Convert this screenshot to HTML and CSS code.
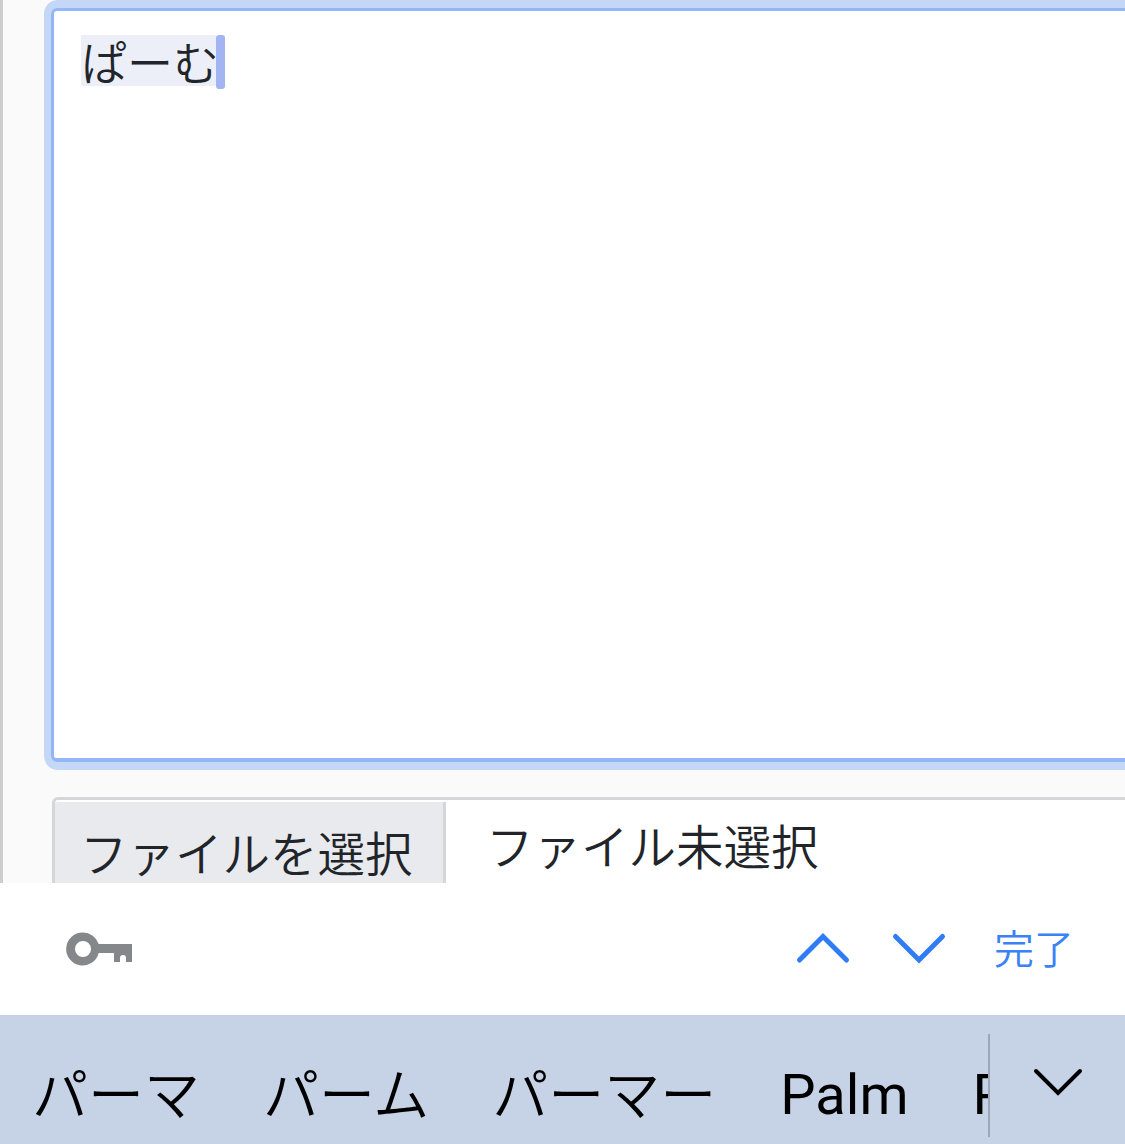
FILE: index.html
```html
<!DOCTYPE html>
<html lang="ja">
<head>
    <title>ぱーむ</title>
    <link rel="stylesheet" href="styles.css">
</head>
<body>
    <main class="page">
        <div class="editor">
            <div class="editor-inner">
                <span class="composing">ぱーむ</span><span class="caret"></span>
            </div>
        </div>
        <div class="file-input">
            <div class="file-button">ファイルを選択</div>
            <div class="file-name">ファイル未選択</div>
        </div>
    </main>

    <div class="toolbar">
        <svg class="key-icon" width="68" height="34" viewBox="0 0 68 34">
            <path fill-rule="evenodd" fill="#85888b" d="M17 .5a16.500 16.500 0 0 1 15.700 11.500H66v18h-6v-4a3 3 0 0 0-6 0v4h-6v-9H32.700A16.500 16.500 0 1 1 17 .5zM17 9a8 8 0 1 0 0 16 8 8 0 0 0 0-16z"/>
        </svg>
        <div class="toolbar-actions">
            <svg class="chevron" width="56" height="34" viewBox="0 0 56 34">
                <path d="M4.500 28L28 4.500 51.500 28"/>
            </svg>
            <svg class="chevron" width="56" height="34" viewBox="0 0 56 34">
                <path d="M4.500 4.500L28 28 51.500 4.500"/>
            </svg>
            <span class="done">完了</span>
        </div>
    </div>

    <div class="suggestions">
        <div class="suggestion-list">
            <span class="kana">パーマ</span>
            <span class="kana">パーム</span>
            <span class="kana">パーマー</span>
            <span class="latin">Palm</span>
            <span class="latin">Parm</span>
        </div>
        <div class="suggestion-more">
            <svg width="50" height="30" viewBox="0 0 50 30">
                <path d="M3 3l22 22L47 3"/>
            </svg>
        </div>
    </div>
</body>
</html>
```

FILE: styles.css
```css
html, body {
    margin: 0;
    padding: 0;
}
body {
    width: 1125px;
    height: 1144px;
    overflow: hidden;
    background: #fff;
    font-family: "Noto Sans CJK JP", "Liberation Sans", sans-serif;
    color: #212529;
}
.page {
    box-sizing: border-box;
    height: 883px;
    overflow: hidden;
    padding-left: 41px;
    background: #fafafa;
    border-left: 3px solid #cdcdcd;
}
.editor {
    box-sizing: border-box;
    width: 1200px;
    height: 770px;
    border: 8px solid #c4d7f7;
    border-left-width: 7px;
    border-radius: 14px;
}
.editor-inner {
    box-sizing: border-box;
    display: flex;
    align-items: flex-start;
    height: 754px;
    padding: 24px 0 0 27px;
    background: #fff;
    border: 3px solid #93b6f9;
    border-bottom-width: 4px;
    border-radius: 6px;
}
.composing {
    width: 135px;
    height: 51px;
    font-size: 46px;
    font-weight: 350;
    line-height: 51px;
    white-space: nowrap;
    background: #eceff8;
}
.caret {
    width: 9px;
    height: 54px;
    background: #a3b4f2;
    border-radius: 3px;
}
.file-input {
    box-sizing: border-box;
    display: flex;
    width: 1200px;
    height: 120px;
    margin: 27px 0 0 8px;
    padding-top: 2px;
    background: #fff;
    border: 3px solid #d4d6da;
    border-radius: 6px;
    font-size: 47.500px;
    font-weight: 350;
}
.file-button {
    width: 391px;
    height: 100px;
    box-sizing: border-box;
    padding: 16px 0 0 25px;
    line-height: 68px;
    background: #e9eaee;
    border-right: 3px solid #d4d6da;
}
.file-name {
    padding: 9px 0 0 40px;
    line-height: 68px;
}
.toolbar {
    display: flex;
    align-items: center;
    justify-content: space-between;
    height: 132px;
    padding: 0 51px 0 66px;
    box-sizing: border-box;
    background: #fff;
}
.key-icon {
    display: block;
}
.toolbar-actions {
    display: flex;
    align-items: center;
    gap: 40px;
}
.chevron {
    display: block;
}
.chevron path {
    fill: none;
    stroke: #2f7cf6;
    stroke-width: 5;
    stroke-linecap: round;
}
.done {
    margin: -4px 0 0 7px;
    font-size: 40px;
    font-weight: 350;
    line-height: 48px;
    color: #3b82f6;
}
.suggestions {
    display: flex;
    height: 129px;
    background: #c6d2e6;
}
.suggestion-list {
    display: flex;
    gap: 63px;
    width: 988px;
    height: 129px;
    box-sizing: border-box;
    padding-left: 32px;
    overflow: hidden;
    font-size: 56px;
    line-height: 160px;
    color: #000;
    white-space: nowrap;
}
.kana {
    font-weight: 350;
    line-height: 152px;
}
.latin {
    font-family: Roboto, sans-serif;
    margin-left: 1px;
}
.suggestion-more {
    display: flex;
    justify-content: center;
    box-sizing: border-box;
    flex: 1;
    height: 103px;
    margin-top: 19px;
    padding-top: 34px;
    border-left: 2px solid #9ea6b4;
}
.suggestion-more svg {
    display: block;
}
.suggestion-more path {
    fill: none;
    stroke: #000;
    stroke-width: 4;
    stroke-linecap: round;
}
```
